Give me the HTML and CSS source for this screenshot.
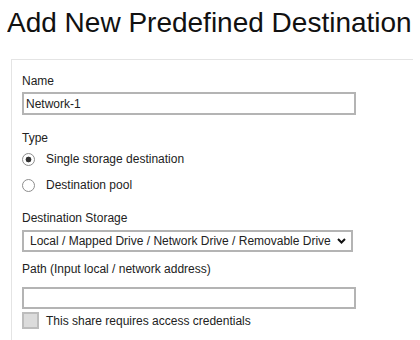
FILE: index.html
```html
<!DOCTYPE html>
<html lang="en">
<head>
    <meta charset="UTF-8">
    <title>Add New Predefined Destination</title>
    <link rel="stylesheet" href="styles.css">
</head>
<body>
    <h1>Add New Predefined Destination</h1>

    <div class="panel">
        <div class="field-label name-label">Name</div>
        <input type="text" class="text-input" value="Network-1">

        <div class="field-label type-label">Type</div>
        <div class="radio-list">
            <label class="radio-row">
                <input type="radio" name="type" checked>
                <span>Single storage destination</span>
            </label>
            <label class="radio-row">
                <input type="radio" name="type">
                <span>Destination pool</span>
            </label>
        </div>

        <div class="field-label storage-label">Destination Storage</div>
        <select class="storage-select">
            <option>Local / Mapped Drive / Network Drive / Removable Drive</option>
        </select>

        <div class="field-label path-label">Path (Input local / network address)</div>
        <input type="text" class="text-input path-input" value="">

        <label class="check-row">
            <input type="checkbox">
            <span>This share requires access credentials</span>
        </label>
    </div>
</body>
</html>
```

FILE: styles.css
```css
body {
    margin: 7px;
    font-family: "Liberation Sans", Arial, sans-serif;
    font-size: 12px;
    line-height: 14px;
    color: #222;
    background-color: #fff;
    overflow: hidden;
}

h1 {
    margin: 0;
    font-size: 28px;
    line-height: 32px;
    font-weight: normal;
    color: #111;
    white-space: nowrap;
}

.panel {
    margin: 20px -6px 0 4px;
    padding: 14px 10px 20px;
    border-top: 1px solid #e4e4e4;
    border-left: 1px solid #e4e4e4;
}

.field-label {
    display: block;
}

.name-label {
    margin-bottom: 4px;
}

.type-label {
    margin-top: 16px;
    margin-bottom: 1px;
}

.storage-label {
    margin-top: 13px;
    margin-bottom: 5px;
}

.path-label {
    margin-top: 10px;
    margin-bottom: 11px;
}

.text-input {
    display: block;
    box-sizing: border-box;
    width: 334px;
    height: 23px;
    margin: 0;
    padding: 0 2px;
    border: 2px solid #b4b4b4;
    border-radius: 0;
    font-family: inherit;
    font-size: 12px;
    color: #222;
    outline: none;
}

.path-input {
    height: 22px;
}

.radio-row {
    display: flex;
    align-items: center;
    height: 26px;
}

.radio-row input {
    appearance: none;
    -webkit-appearance: none;
    box-sizing: border-box;
    width: 13px;
    height: 13px;
    margin: 0 11px 0 0;
    border: 1px solid #8d8d8d;
    border-radius: 50%;
    background-color: #fff;
}

.radio-row input:checked {
    background: radial-gradient(circle, #333 0 2.6px, #fff 3.2px);
}

.storage-select {
    display: block;
    box-sizing: border-box;
    width: 331px;
    height: 22px;
    margin: 0;
    padding: 0 0 0 6px;
    border: 2px solid #b4b4b4;
    border-radius: 0;
    appearance: none;
    -webkit-appearance: none;
    background-color: #fff;
    background-image: url("data:image/svg+xml,%3Csvg xmlns='http://www.w3.org/2000/svg' width='9' height='6' viewBox='0 0 9 6'%3E%3Cpath d='M1 1l3.5 3.5L8 1' fill='none' stroke='%23111' stroke-width='2'/%3E%3C/svg%3E");
    background-repeat: no-repeat;
    background-position: right 5px center;
    font-family: inherit;
    font-size: 12px;
    color: #222;
    outline: none;
}

.check-row {
    display: flex;
    align-items: center;
    margin-top: 3px;
}

.check-row input {
    appearance: none;
    -webkit-appearance: none;
    box-sizing: border-box;
    width: 17px;
    height: 17px;
    margin: 0 7px 0 0;
    border: 2px solid #bdbdbd;
    border-radius: 0;
    background-color: #dcdcdc;
}
```
